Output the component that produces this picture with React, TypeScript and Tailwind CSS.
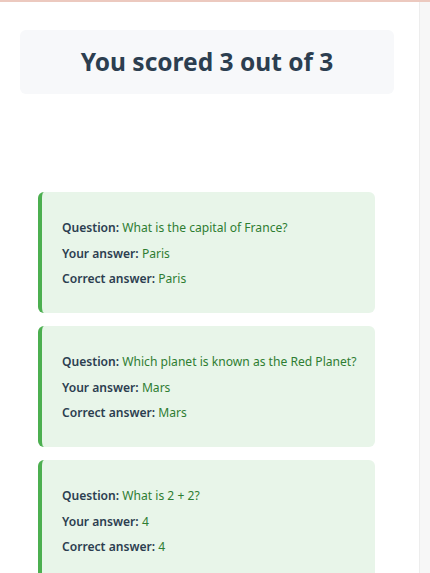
const results = [
  { question: 'What is the capital of France?', yours: 'Paris', correct: 'Paris' },
  { question: 'Which planet is known as the Red Planet?', yours: 'Mars', correct: 'Mars' },
  { question: 'What is 2 + 2?', yours: '4', correct: '4' },
];

const App = () => {
  return (
    <div
      className="flex h-[573px] w-[430px] overflow-hidden border-t-2 border-[#ecc9bf] bg-white"
      style={{ fontFamily: '"Noto Sans", "Open Sans", sans-serif' }}
    >
      <main className="w-[419px] shrink-0 pl-[20px] pr-[25px] pt-[28px]">
        {/* Score */}
        <div className="flex h-[64px] items-center justify-center rounded-md bg-[#f7f8fa]">
          <h1 className="mt-[1px] text-[24.5px] font-bold text-[#2c3e50]">You scored 3 out of 3</h1>
        </div>

        {/* Results */}
        <div className="mt-[98px] flex flex-col gap-[13.5px] pl-[18px] pr-[19px]">
          {results.map((r) => (
            <div
              key={r.question}
              className="rounded-md border-l-4 border-[#4caf50] bg-[#e8f5e9] pb-[21px] pl-[20px] pt-[23px] text-[12.1px] leading-[25.5px]"
            >
              <p>
                <span className="font-semibold text-[#2c3e50]">Question:</span>{' '}
                <span className="text-[#2e7d32]">{r.question}</span>
              </p>
              <p>
                <span className="font-semibold text-[#2c3e50]">Your answer:</span>{' '}
                <span className="text-[#2e7d32]">{r.yours}</span>
              </p>
              <p>
                <span className="font-semibold text-[#2c3e50]">Correct answer:</span>{' '}
                <span className="text-[#2e7d32]">{r.correct}</span>
              </p>
            </div>
          ))}
        </div>
      </main>
      <aside className="flex-1 border-l border-[#ededed] bg-[#f7f7f7]" />
    </div>
  );
};

export default App;
